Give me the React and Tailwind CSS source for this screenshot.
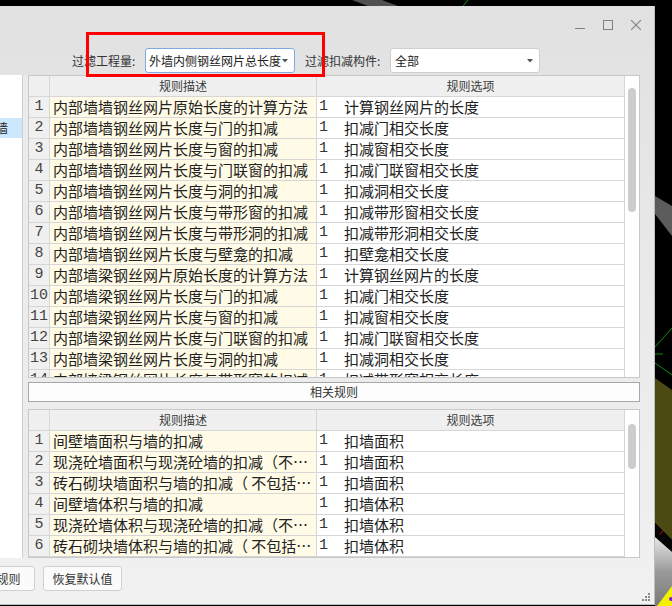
import React from "react";

const upperRows = [
  ["内部墙墙钢丝网片原始长度的计算方法", "计算钢丝网片的长度"],
  ["内部墙墙钢丝网片长度与门的扣减", "扣减门相交长度"],
  ["内部墙墙钢丝网片长度与窗的扣减", "扣减窗相交长度"],
  ["内部墙墙钢丝网片长度与门联窗的扣减", "扣减门联窗相交长度"],
  ["内部墙墙钢丝网片长度与洞的扣减", "扣减洞相交长度"],
  ["内部墙墙钢丝网片长度与带形窗的扣减", "扣减带形窗相交长度"],
  ["内部墙墙钢丝网片长度与带形洞的扣减", "扣减带形洞相交长度"],
  ["内部墙墙钢丝网片长度与壁龛的扣减", "扣壁龛相交长度"],
  ["内部墙梁钢丝网片原始长度的计算方法", "计算钢丝网片的长度"],
  ["内部墙梁钢丝网片长度与门的扣减", "扣减门相交长度"],
  ["内部墙梁钢丝网片长度与窗的扣减", "扣减窗相交长度"],
  ["内部墙梁钢丝网片长度与门联窗的扣减", "扣减门联窗相交长度"],
  ["内部墙梁钢丝网片长度与洞的扣减", "扣减洞相交长度"],
  ["内部墙梁钢丝网片长度与带形窗的扣减", "扣减带形窗相交长度"],
];

const lowerRows = [
  ["间壁墙面积与墙的扣减", "扣墙面积"],
  ["现浇砼墙面积与现浇砼墙的扣减（不…", "扣墙面积"],
  ["砖石砌块墙面积与墙的扣减（ 不包括…", "扣墙面积"],
  ["间壁墙体积与墙的扣减", "扣墙体积"],
  ["现浇砼墙体积与现浇砼墙的扣减（不…", "扣墙体积"],
  ["砖石砌块墙体积与墙的扣减（ 不包括…", "扣墙体积"],
];

function Row({ n, desc, opt }) {
  return (
    <div className="grid grid-cols-[21px_267px_308px] h-[21px] border-b border-[#d6d6d6]">
      <div className="bg-[#f0f0f0] border-r border-[#d6d6d6] text-center text-[15px] leading-[20px] text-[#444] font-['Liberation_Mono',monospace]">
        {n}
      </div>
      <div className="bg-[#fffbe6] border-r border-[#d6d6d6] pl-[3px] text-[15px] leading-[20px] text-[#222] whitespace-nowrap overflow-hidden">
        {desc}
      </div>
      <div className="bg-white border-r border-[#d6d6d6] flex text-[15px] leading-[20px] text-[#222] whitespace-nowrap overflow-hidden">
        <span className="w-[27px] shrink-0 pl-[2px] font-['Liberation_Mono',monospace] text-[#333]">1</span>
        <span>{opt}</span>
      </div>
    </div>
  );
}

function Table({ rows, heightClass, thumbTopClass, thumbHClass }) {
  return (
    <div className={`flex border border-[#c8c8c8] bg-white overflow-hidden ${heightClass}`}>
      <div className="w-[596px] overflow-hidden">
        <div className="grid grid-cols-[21px_267px_308px] h-[21px] border-b border-[#d6d6d6] bg-[#f0f0f0] text-[12px] leading-[20px] text-[#3a3a3a]">
          <div className="border-r border-[#d6d6d6]" />
          <div className="border-r border-[#d6d6d6] text-center">规则描述</div>
          <div className="border-r border-[#d6d6d6] text-center">规则选项</div>
        </div>
        {rows.map((r, i) => (
          <Row key={i} n={i + 1} desc={r[0]} opt={r[1]} />
        ))}
      </div>
      <div className={`w-[14px] bg-white ${thumbTopClass}`}>
        <div className={`ml-[3px] w-[8px] rounded-full bg-[#cdcdcd] ${thumbHClass}`} />
      </div>
    </div>
  );
}

function Arrow() {
  return (
    <svg width="6" height="4" viewBox="0 0 6 4" className="shrink-0">
      <polygon points="0,0 6,0 3,3.5" fill="#555" />
    </svg>
  );
}

export default function App() {
  return (
    <div className="relative w-[672px] h-[606px] overflow-hidden bg-black font-['Noto_Sans_CJK_SC',sans-serif]">
      <svg className="absolute inset-0" width="672" height="606" viewBox="0 0 672 606">
        <rect width="672" height="606" fill="#000" />
        <polygon points="352,0 382,0 398,6 368,6" fill="#505050" />
        <line x1="468" y1="0" x2="463" y2="6" stroke="#0b8f0b" strokeWidth="1" />
        <polygon points="655,196 672,206 672,236 655,214" fill="#5c5c5c" />
        <line x1="672" y1="328" x2="655" y2="347" stroke="#0b8f0b" strokeWidth="1" />
        <line x1="655" y1="354" x2="663" y2="354" stroke="#0b8f0b" strokeWidth="1" />
        <line x1="655" y1="363" x2="672" y2="375" stroke="#0b8f0b" strokeWidth="1" />
        <polygon points="655,378 672,390 672,540 655,523" fill="#4b4a12" />
        <polygon points="655,523 672,540 672,552 655,537" fill="#050505" />
        <line x1="660" y1="535" x2="663" y2="530" stroke="#c00" strokeWidth="1" />
        <defs>
          <linearGradient id="wg" x1="0" y1="0" x2="0" y2="1">
            <stop offset="0" stopColor="#e8e8e8" />
            <stop offset="0.5" stopColor="#9a9a9a" />
            <stop offset="1" stopColor="#7a7a7a" />
          </linearGradient>
        </defs>
        <polygon points="655,537 672,552 672,606 655,606" fill="url(#wg)" />
        <polygon points="657,606 672,586 672,606" fill="#f3f000" />
        <circle cx="671" cy="599" r="2" fill="#7a20e0" />
      </svg>

      <div className="relative mt-[6px] w-[655px] h-[599px] flex flex-col border-r border-b border-[#bdbdbd] bg-gradient-to-b from-[#e1e1e1] via-[#eaeaea] to-[#f1f1f1]">
        {/* title bar */}
        <div className="h-[36px] flex justify-end items-start pt-[14px] pr-[13px] gap-[18px] shrink-0">
          <svg width="10" height="10" viewBox="0 0 10 10">
            <line x1="0" y1="8.5" x2="10" y2="8.5" stroke="#808080" strokeWidth="1" />
          </svg>
          <svg width="10" height="10" viewBox="0 0 10 10">
            <rect x="0.5" y="0.5" width="9" height="9" fill="none" stroke="#808080" strokeWidth="1" />
          </svg>
          <svg width="10" height="10" viewBox="0 0 10 10">
            <line x1="0" y1="0" x2="10" y2="10" stroke="#808080" strokeWidth="1.1" />
            <line x1="10" y1="0" x2="0" y2="10" stroke="#808080" strokeWidth="1.1" />
          </svg>
        </div>

        {/* filter row */}
        <div className="h-[33px] shrink-0 flex items-start pt-[6px] pl-[72px] text-[12px] text-[#333]">
          <span className="w-[73px] leading-[25px] whitespace-nowrap">过滤工程量:</span>
          <div className="w-[150px] h-[25px] bg-white border border-[#7fa9e2] rounded-[3px] flex items-center pl-[3px] pr-[6px]">
            <span className="flex-1 whitespace-nowrap text-[#222]">外墙内侧钢丝网片总长度</span>
            <Arrow />
          </div>
          <span className="ml-[10px] w-[85px] leading-[25px] whitespace-nowrap">过滤扣减构件:</span>
          <div className="w-[150px] h-[25px] bg-white border border-[#cfcfcf] rounded-[3px] flex items-center pl-[4px] pr-[6px]">
            <span className="flex-1 whitespace-nowrap text-[#222]">全部</span>
            <Arrow />
          </div>
        </div>

        {/* main */}
        <div className="h-[483px] shrink-0 flex">
          <div className="w-[23px] h-[483px] bg-white border-r border-[#cfcfcf] overflow-hidden">
            <div className="mt-[43px] h-[20px] bg-[#cce8ff] text-[12px] leading-[20px] text-[#222] whitespace-nowrap">
              <span className="-ml-[4px]">墙</span>
            </div>
          </div>
          <div className="w-[5px] bg-[#ececec]" />
          <div className="w-[612px] flex flex-col">
            <Table rows={upperRows} heightClass="h-[304px]" thumbTopClass="pt-[12px]" thumbHClass="h-[124px]" />
            <div className="mt-[4px] h-[20px] border border-[#a6a6a6] bg-[#fdfdfd] text-center text-[12px] leading-[18px] text-[#333]">
              相关规则
            </div>
            <div className="mt-[7px]">
              <Table rows={lowerRows} heightClass="h-[149px]" thumbTopClass="pt-[14px]" thumbHClass="h-[45px]" />
            </div>
          </div>
        </div>

        {/* bottom */}
        <div className="flex-1 flex items-start pt-[8px] text-[12px] text-[#333]">
          <div className="-ml-[42px] w-[77px] h-[25px] bg-[#fbfbfb] border border-[#d0d0d0] rounded-[3px] text-center leading-[23px]">
            删除规则
          </div>
          <div className="ml-[8px] w-[79px] h-[25px] bg-[#fbfbfb] border border-[#d0d0d0] rounded-[3px] text-center leading-[23px]">
            恢复默认值
          </div>
          <div className="ml-auto mr-[4px] mt-[27px]">
            <svg width="8" height="8" viewBox="0 0 8 8">
              <rect x="6" y="0" width="2" height="2" fill="#8a8a8a" />
              <rect x="3" y="3" width="2" height="2" fill="#8a8a8a" />
              <rect x="6" y="3" width="2" height="2" fill="#8a8a8a" />
              <rect x="0" y="6" width="2" height="2" fill="#8a8a8a" />
              <rect x="3" y="6" width="2" height="2" fill="#8a8a8a" />
              <rect x="6" y="6" width="2" height="2" fill="#8a8a8a" />
            </svg>
          </div>
        </div>
      </div>

      {/* annotation box */}
      <div className="absolute left-[86px] top-[32px] w-[239px] h-[45px] border-[3px] border-[#ff0000]" />
    </div>
  );
}
